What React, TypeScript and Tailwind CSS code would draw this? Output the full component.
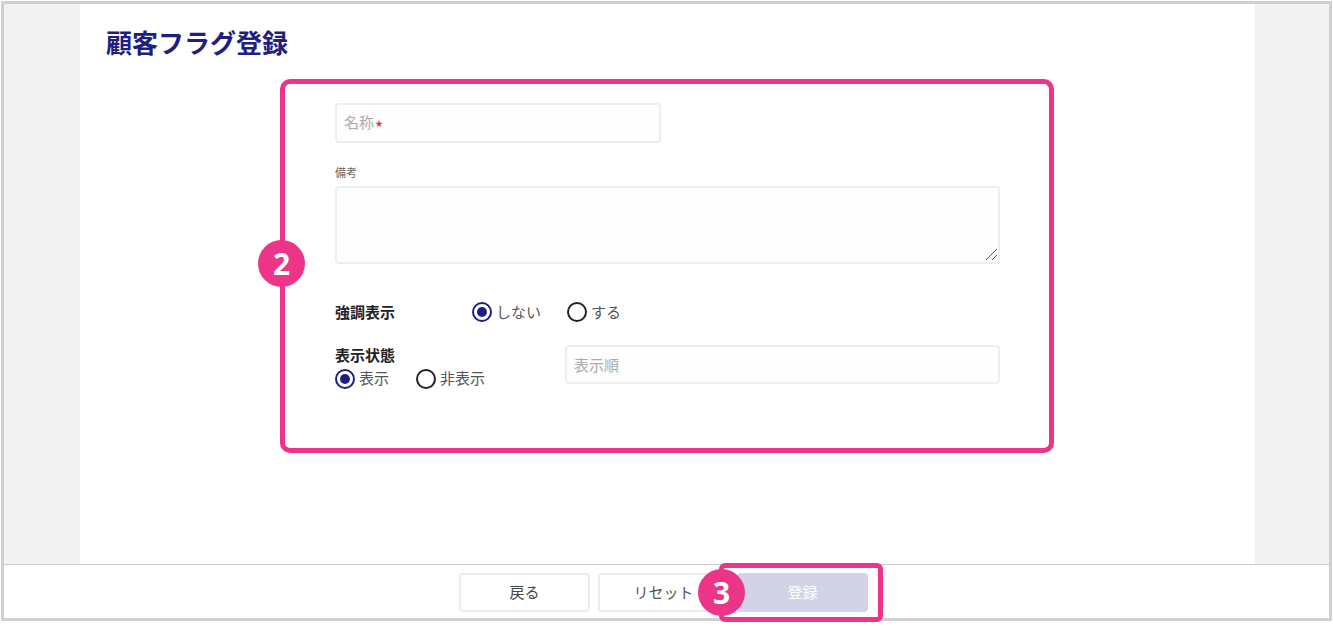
const font = { fontFamily: '"Noto Sans CJK JP", "Liberation Sans", sans-serif' };

const Radio = ({ label, checked }: { label: string; checked?: boolean }) => (
  <label className="flex items-center gap-[4px] text-[15px] leading-[20px] text-[#555]">
    <span
      className={`flex h-[20px] w-[20px] items-center justify-center rounded-full border-2 ${
        checked ? "border-[#1d2080]" : "border-[#222]"
      }`}
    >
      {checked && <span className="h-[10px] w-[10px] rounded-full bg-[#1d2080]" />}
    </span>
    <span className="pb-[1px]">{label}</span>
  </label>
);

const Badge = ({ n, className }: { n: string; className: string }) => (
  <div
    className={`absolute flex h-[47px] w-[47px] items-center justify-center rounded-full bg-[#ec3488] text-[30px] font-bold text-white ${className}`}
    style={{ fontFamily: '"Open Sans", sans-serif' }}
  >
    {n}
  </div>
);

const App = () => {
  return (
    <div className="relative h-[629px] w-[1333px] overflow-hidden bg-white" style={font}>
      <div className="ml-px mt-px flex h-[620px] w-[1331px] flex-col border-[3px] border-[#d0d0d0] bg-[#f2f2f2]">
        <main className="ml-[76px] mr-[74px] h-[560px] bg-white pl-[26px] pt-[20px]">
          <h1 className="text-[26px] font-bold leading-[36px] text-[#1d2080]">顧客フラグ登録</h1>

          <section className="relative ml-[174px] mt-[19px] h-[374px] w-[774px] rounded-[10px] border-[5px] border-[#ec3488] pl-[50px] pr-[49px] pt-[19px]">
            <div className="flex h-[40px] w-[326px] items-center rounded-[4px] border-2 border-[#eeeeee] bg-[#fefefe] pb-[2px] pl-[7px] text-[15px] text-[#aaa]">
              名称<span className="ml-[1px] mt-[2px] text-[8px] text-[#d83a5a]">★</span>
            </div>

            <p className="mt-[21px] text-[11px] leading-[16px] text-[#666]">備考</p>
            <div className="relative mt-[6px]">
              <textarea className="block h-[78px] w-full resize-none rounded-[4px] border-2 border-[#eeeeee] bg-[#fefefe]" />
              <svg className="absolute bottom-[3px] right-[2px] h-[13px] w-[13px]" viewBox="0 0 13 13" stroke="#555" fill="none">
                <path d="M1 12L12 1M7 12L12 7" />
              </svg>
            </div>

            <div className="mt-[36px] flex h-[24px] items-center">
              <span className="w-[137px] text-[15px] font-bold text-[#222]">強調表示</span>
              <Radio label="しない" checked />
              <span className="w-[26px]" />
              <Radio label="する" />
            </div>

            <div className="mt-[21px] flex">
              <div className="w-[230px]">
                <p className="text-[15px] font-bold leading-[20px] text-[#222]">表示状態</p>
                <div className="mt-[3px] flex gap-[27px]">
                  <Radio label="表示" checked />
                  <Radio label="非表示" />
                </div>
              </div>
              <input
                placeholder="表示順"
                className="h-[39px] flex-1 rounded-[4px] border-2 border-[#eeeeee] bg-[#fefefe] pl-[7px] text-[15px] placeholder:text-[#aaa]"
              />
            </div>

            <Badge n="2" className="left-[-27px] top-[156px]" />
          </section>
        </main>

        <footer className="relative flex flex-1 items-center justify-center gap-[8px] border-t border-[#cccccc] bg-white pr-[6px] pt-[2px]">
          <button className="h-[39px] w-[131px] rounded-[4px] border-2 border-[#ececec] bg-white text-[15px] text-[#444]">
            戻る
          </button>
          <button className="h-[39px] w-[131px] rounded-[4px] border-2 border-[#ececec] bg-white text-[15px] text-[#555]">
            リセット
          </button>
          <button className="h-[39px] w-[131px] rounded-[4px] bg-[#d2d3e6] text-[15px] text-white">登録</button>

          <div className="absolute left-[715px] top-[-2px] h-[59px] w-[164px] rounded-[6px] border-[5px] border-[#ec3488]" />
          <Badge n="3" className="left-[694px] top-[4px]" />
        </footer>
      </div>
    </div>
  );
};

export default App;
